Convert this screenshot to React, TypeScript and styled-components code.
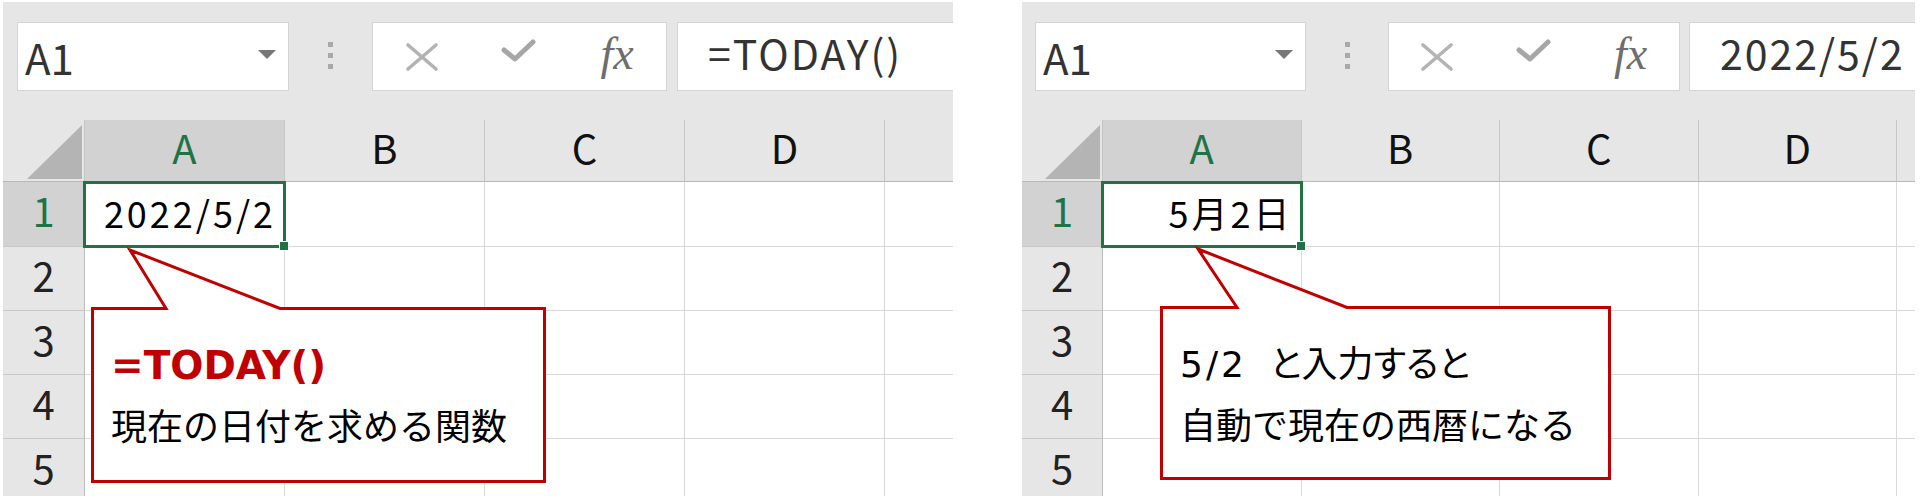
import React from "react";
import styled, { createGlobalStyle, css } from "styled-components";

const FONT = `"Noto Sans CJK JP", "Noto Sans", sans-serif`;
const CALLOUT_FONT = `"DejaVu Sans", "Noto Sans CJK JP", sans-serif`;

const GlobalStyle = createGlobalStyle`
  html, body { margin: 0; padding: 0; background: #fff; }
  body { font-family: ${FONT}; }
`;

type Metrics = {
  width: number;
  padLeft: number;
  nameW: number;
  gripW: number;
  btnW: number;
  gap: number;
  headW: number;
  colW: number;
};

type CalloutSpec = {
  x: number;
  y: number;
  w: number;
  h: number;
  ax: number;
  ay: number;
  b1: number;
  b2: number;
};

const Page = styled.div`
  display: flex;
  gap: 69px;
  padding: 2px 0 0 3px;
  height: 496px;
  box-sizing: border-box;
  overflow: hidden;
`;

const Panel = styled.div<{ $w: number }>`
  position: relative;
  flex: none;
  width: ${(p) => p.$w}px;
  height: 494px;
  overflow: hidden;
  background: #e6e6e6;
  display: flex;
  flex-direction: column;
`;

const FormulaBar = styled.div<{ $pl: number }>`
  flex: none;
  display: flex;
  align-items: flex-start;
  height: 118px;
  box-sizing: border-box;
  padding: 20px 0 0 ${(p) => p.$pl}px;
`;

const NameBox = styled.div<{ $w: number }>`
  flex: none;
  width: ${(p) => p.$w}px;
  height: 69px;
  box-sizing: border-box;
  background: #fff;
  border: 1px solid #d4d4d4;
  display: flex;
  align-items: center;
  justify-content: space-between;
  padding: 0 12px 0 7px;
  font-size: 42px;
  line-height: 1;
  color: #333;
`;

const Caret = styled.span`
  width: 0;
  height: 0;
  border-left: 9px solid transparent;
  border-right: 9px solid transparent;
  border-top: 9px solid #777;
  margin-bottom: 4px;
`;

const Grip = styled.div<{ $w: number }>`
  flex: none;
  width: ${(p) => p.$w}px;
  height: 69px;
  display: flex;
  flex-direction: column;
  align-items: center;
  justify-content: center;
  gap: 6px;
  padding-bottom: 2px;
  box-sizing: border-box;
`;

const Dot = styled.span`
  width: 5px;
  height: 5px;
  background: #a9a9a9;
`;

const ButtonBox = styled.div<{ $w: number }>`
  flex: none;
  width: ${(p) => p.$w}px;
  height: 69px;
  box-sizing: border-box;
  background: #fff;
  border: 1px solid #d4d4d4;
  display: grid;
  grid-template-columns: repeat(3, 1fr);
`;

const ButtonSlot = styled.div`
  display: flex;
  align-items: center;
  justify-content: center;
`;

const Fx = styled.span`
  font-family: "Liberation Serif", "Times New Roman", serif;
  font-style: italic;
  font-size: 46px;
  line-height: 1;
  color: #6e6e6e;
  padding-bottom: 6px;
`;

const FormulaInput = styled.div<{ $gap: number }>`
  flex: 1;
  margin-left: ${(p) => p.$gap}px;
  margin-right: -20px;
  height: 69px;
  box-sizing: border-box;
  background: #fff;
  border: 1px solid #d4d4d4;
  display: flex;
  align-items: center;
  padding: 0 0 8px 30px;
  font-size: 41px;
  line-height: 1;
  letter-spacing: 2px;
  color: #333;
  white-space: nowrap;
`;

const Sheet = styled.div<{ $headW: number; $colW: number }>`
  flex: none;
  display: grid;
  grid-template-columns: ${(p) => p.$headW}px repeat(5, ${(p) => p.$colW}px);
  grid-template-rows: 62px 65px repeat(4, 64px);
  background: #fff;
`;

const Corner = styled.div`
  background: #e6e6e6;
  border-right: 1px solid #c4c4c4;
  border-bottom: 1px solid #b8b8b8;
  display: flex;
  align-items: flex-end;
  justify-content: flex-end;
  padding: 0 2px 2px 0;
`;

const CornerTriangle = styled.span`
  width: 55px;
  height: 54px;
  background: #b4b4b4;
  clip-path: polygon(100% 0, 100% 100%, 0 100%);
`;

const ColHeader = styled.div<{ $sel?: boolean }>`
  background: ${(p) => (p.$sel ? "#d2d2d2" : "#e6e6e6")};
  border-right: 1px solid #c6c6c6;
  border-bottom: 1px solid #b8b8b8;
  display: flex;
  align-items: center;
  justify-content: center;
  padding-bottom: 8px;
  font-size: 40px;
  line-height: 1;
  color: ${(p) => (p.$sel ? "#217346" : "#111")};
`;

const RowHeader = styled.div<{ $sel?: boolean }>`
  background: ${(p) => (p.$sel ? "#d2d2d2" : "#e6e6e6")};
  border-right: 1px solid #bcbcbc;
  border-bottom: 1px solid #c8c8c8;
  display: flex;
  align-items: center;
  justify-content: center;
  padding-bottom: 8px;
  font-size: 40px;
  line-height: 1;
  color: ${(p) => (p.$sel ? "#217346" : "#222")};
`;

const Cell = styled.div<{ $sel?: boolean }>`
  background: #fff;
  border-right: 1px solid #d9d9d9;
  border-bottom: 1px solid #d9d9d9;
  display: flex;
  align-items: center;
  justify-content: flex-end;
  padding: 0 8px 4px 0;
  font-size: 36px;
  line-height: 1;
  letter-spacing: 3px;
  color: #000;
  white-space: nowrap;
  ${(p) =>
    p.$sel &&
    css`
      position: relative;
      z-index: 1;
      &::after {
        content: "";
        position: absolute;
        left: -2px;
        top: -1px;
        right: -2px;
        bottom: -2px;
        border: 3px solid #217346;
        pointer-events: none;
      }
      &::before {
        content: "";
        position: absolute;
        right: -5px;
        bottom: -5px;
        width: 8px;
        height: 8px;
        background: #217346;
        border: 1px solid #fff;
        z-index: 1;
      }
    `}
`;

const CalloutBox = styled.div`
  position: absolute;
  z-index: 2;
  box-sizing: border-box;
  padding: 28px 20px 0 20px;
  font-family: ${CALLOUT_FONT};
  font-size: 36px;
  line-height: 62px;
  color: #000;
  white-space: pre;
`;

const CalloutShape = styled.svg`
  position: absolute;
  left: 0;
  overflow: visible;
`;

const CalloutText = styled.div`
  position: relative;
`;

const Line = styled.div<{ $palt?: boolean }>`
  ${(p) =>
    p.$palt &&
    css`
      font-feature-settings: "palt";
    `}
`;

const Num = styled.span`
  letter-spacing: 3px;
`;

const Formula = styled.div`
  font-weight: 700;
  font-size: 39px;
  color: #c00000;
`;

const CancelIcon = () => (
  <svg width="34" height="30" viewBox="0 0 34 30">
    <path d="M3 3 L31 27 M31 3 L3 27" stroke="#b3b3b3" strokeWidth="3.6" strokeLinecap="round" fill="none" />
  </svg>
);

const EnterIcon = () => (
  <svg width="38" height="38" viewBox="0 0 38 38">
    <path d="M4 12 L15 21 L33 4" stroke="#a6a6a6" strokeWidth="5" strokeLinecap="round" strokeLinejoin="round" fill="none" />
  </svg>
);

function Callout({ spec, children }: { spec: CalloutSpec; children: React.ReactNode }) {
  const { x, y, w, h, ax, ay, b1, b2 } = spec;
  const d = `M1.5 1.5 H${b1} L${ax} ${ay} L${b2} 1.5 H${w - 1.5} V${h - 1.5} H1.5 Z`;
  return (
    <CalloutBox style={{ left: x, top: y, width: w, height: h }}>
      <CalloutShape width={w} height={h - ay} viewBox={`0 ${ay} ${w} ${h - ay}`} style={{ top: ay }}>
        <path d={d} fill="#fff" stroke="#c00000" strokeWidth="3" strokeMiterlimit="10" />
      </CalloutShape>
      <CalloutText>{children}</CalloutText>
    </CalloutBox>
  );
}

const COLS = ["A", "B", "C", "D", ""];
const ROWS = [1, 2, 3, 4, 5];

function SheetPanel({
  m,
  formula,
  cell,
  callout,
  children,
}: {
  m: Metrics;
  formula: string;
  cell: string;
  callout: CalloutSpec;
  children: React.ReactNode;
}) {
  return (
    <Panel $w={m.width}>
      <FormulaBar $pl={m.padLeft}>
        <NameBox $w={m.nameW}>
          <span>A1</span>
          <Caret />
        </NameBox>
        <Grip $w={m.gripW}>
          <Dot />
          <Dot />
          <Dot />
        </Grip>
        <ButtonBox $w={m.btnW}>
          <ButtonSlot>
            <CancelIcon />
          </ButtonSlot>
          <ButtonSlot>
            <EnterIcon />
          </ButtonSlot>
          <ButtonSlot>
            <Fx>fx</Fx>
          </ButtonSlot>
        </ButtonBox>
        <FormulaInput $gap={m.gap}>{formula}</FormulaInput>
      </FormulaBar>
      <Sheet $headW={m.headW} $colW={m.colW}>
        <Corner>
          <CornerTriangle />
        </Corner>
        {COLS.map((c, i) => (
          <ColHeader key={"h" + i} $sel={c === "A"}>
            {c}
          </ColHeader>
        ))}
        {ROWS.map((r) => (
          <React.Fragment key={r}>
            <RowHeader $sel={r === 1}>{r}</RowHeader>
            {COLS.map((c, i) => {
              const sel = r === 1 && c === "A";
              return (
                <Cell key={r + "-" + i} $sel={sel}>
                  {sel ? cell : null}
                </Cell>
              );
            })}
          </React.Fragment>
        ))}
      </Sheet>
      <Callout spec={callout}>{children}</Callout>
    </Panel>
  );
}

const LEFT: Metrics = { width: 950, padLeft: 14, nameW: 272, gripW: 83, btnW: 295, gap: 10, headW: 82, colW: 200 };
const RIGHT: Metrics = { width: 893, padLeft: 13, nameW: 271, gripW: 82, btnW: 292, gap: 9, headW: 81, colW: 198.5 };

export default function App() {
  return (
    <>
      <GlobalStyle />
      <Page>
        <SheetPanel
          m={LEFT}
          formula="=TODAY()"
          cell="2022/5/2"
          callout={{ x: 88, y: 305, w: 455, h: 176, ax: 39, ay: -57, b1: 75, b2: 189 }}
        >
          <Formula>=TODAY()</Formula>
          <Line>現在の日付を求める関数</Line>
        </SheetPanel>
        <SheetPanel
          m={RIGHT}
          formula="2022/5/2"
          cell="5月2日"
          callout={{ x: 138, y: 304, w: 451, h: 174, ax: 38, ay: -57, b1: 77, b2: 187 }}
        >
          <Line $palt>
            <Num>5/2</Num>
            {"  と入力すると"}
          </Line>
          <Line>自動で現在の西暦になる</Line>
        </SheetPanel>
      </Page>
    </>
  );
}
